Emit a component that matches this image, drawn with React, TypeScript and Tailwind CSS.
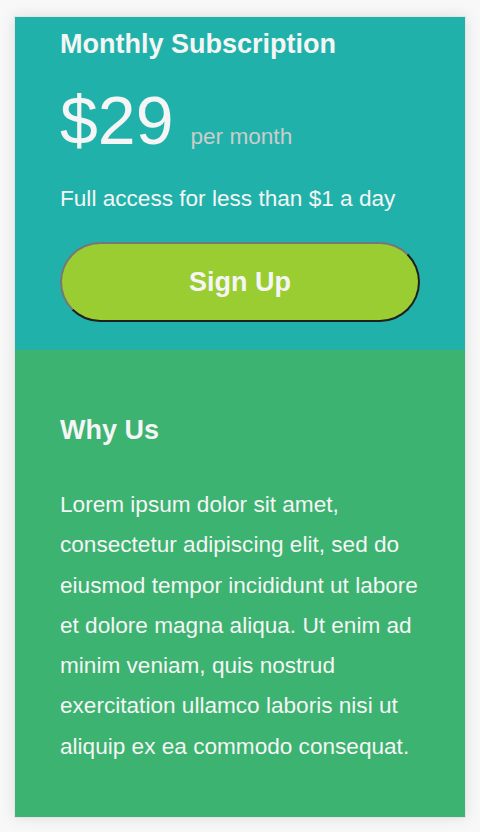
const App = () => {
  return (
    <div
      className="min-h-screen bg-[#f8f8f8] px-[14px] pt-[16px] pb-[14px]"
      style={{ fontFamily: '"Liberation Sans", Arial, sans-serif' }}
    >
      <div className="w-[452px] shadow-[0_0_14px_rgba(0,0,0,0.1)] border border-[#e4e4e4] text-[#f5f5f5]">
        <section className="bg-[#20b2aa] px-[45px] pt-[11px] pb-[28px]">
          <h2 className="text-[27px] leading-[32px] font-bold">Monthly Subscription</h2>
          <div className="mt-[26px] flex items-baseline">
            <span className="text-[68px] leading-none">$29</span>
            <span className="ml-[17px] text-[22.6px] leading-none text-[#cccccc]">per month</span>
          </div>
          <p className="mt-[29px] text-[22.6px] leading-[32px]">Full access for less than $1 a day</p>
          <button className="mt-[27px] w-[360px] h-[80px] rounded-full bg-[#9acd32] border-2 border-t-[#777777] border-l-[#777777] border-r-[#1f1f1f] border-b-[#1f1f1f] text-[27px] font-bold text-[#f5f5f5]">
            Sign Up
          </button>
        </section>
        <section className="bg-[#3cb371] px-[45px] pt-[64px] pb-[50px]">
          <h2 className="text-[27px] leading-[32px] font-bold">Why Us</h2>
          <p className="mt-[39px] text-[22.6px] leading-[40.3px]">
            Lorem ipsum dolor sit amet, consectetur adipiscing elit, sed do eiusmod tempor incididunt ut
            labore et dolore magna aliqua. Ut enim ad minim veniam, quis nostrud exercitation ullamco
            laboris nisi ut aliquip ex ea commodo consequat.
          </p>
        </section>
      </div>
    </div>
  );
};

export default App;
